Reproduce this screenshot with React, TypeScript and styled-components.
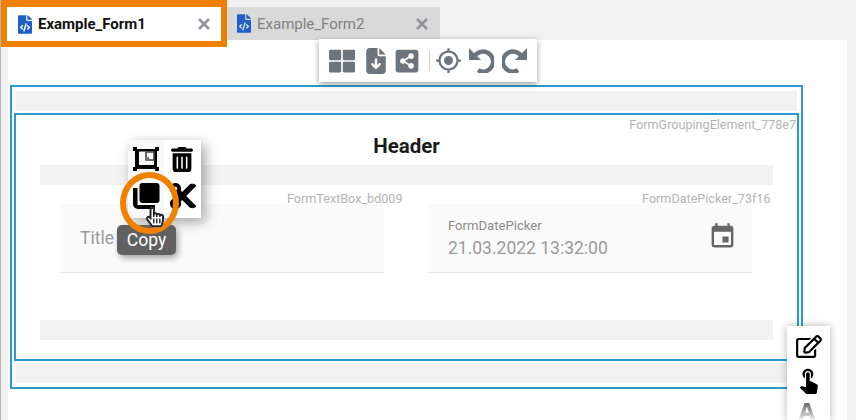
import React from "react";
import styled, { createGlobalStyle } from "styled-components";
import { FaFileCode, FaThLarge, FaShareAltSquare, FaRegEdit, FaCut, FaHandPointer, FaRegHandPointer } from "react-icons/fa";
import { FaFileArrowDown, FaTrashCan } from "react-icons/fa6";
import { MdGpsFixed, MdTouchApp, MdEvent } from "react-icons/md";

const Global = createGlobalStyle`
  html, body { margin: 0; padding: 0; width: 856px; height: 420px; overflow: hidden; background: #f0f0f0; }
  body { font-family: Roboto, "Noto Sans", sans-serif; }
  #root { width: 856px; height: 420px; }
`;

const Window = styled.div`
  position: relative;
  width: 856px;
  height: 420px;
  overflow: hidden;
  background: #f1f1f1;
  box-sizing: border-box;
  border-left: 1px solid #b5b5b5;
  display: flex;
  flex-direction: column;
`;

const TabBar = styled.div`
  display: flex;
  align-items: flex-start;
  height: 40px;
  flex: none;
  position: relative;
  z-index: 2;
`;

const Tab = styled.div<{ $active?: boolean }>`
  box-sizing: border-box;
  display: flex;
  align-items: center;
  flex: none;
  ${(p) =>
    p.$active
      ? `width: 226px; height: 47px; border: 6px solid #f08000; border-top-width: 7px; background: #fff; padding: 0 11px 0 11px; color: #111; font-weight: 700;`
      : `width: 213px; height: 33px; margin-top: 7px; background: #d9d9d9; padding: 0 12px 0 10px; color: #808080;`}
`;

const TabIcon = styled(FaFileCode)`
  width: 14px;
  height: 19px;
  color: #1f5fc8;
  flex: none;
`;

const TabLabel = styled.span`
  font-size: 15px;
  line-height: 20px;
  margin-left: 6px;
  flex: 1;
`;

const CloseGlyph = styled.svg`
  width: 12px;
  height: 12px;
  flex: none;
  stroke: #8f959b;
  stroke-width: 2.6;
  fill: none;
`;

const Canvas = styled.div`
  flex: none;
  box-sizing: border-box;
  height: 380px;
  margin: 0 9px 0 7px;
  background: #fff;
  padding: 45px 44px 0 2px;
`;

const OuterFrame = styled.div`
  position: relative;
  box-sizing: border-box;
  height: 304px;
  border: 2px solid #2b9ad0;
  padding: 4px;
  display: flex;
  flex-direction: column;
`;

const Strip = styled.div`
  height: 20px;
  flex: none;
  background: #f2f2f2;
`;

const InnerFrame = styled.div`
  position: relative;
  box-sizing: border-box;
  height: 248px;
  margin: 2px -2px;
  border: 2px solid #2b9ad0;
  padding: 0 24px;
  display: flex;
  flex-direction: column;
  flex: none;
`;

const ElementTag = styled.span`
  position: absolute;
  font-size: 12.6px;
  line-height: 14px;
  color: #b4b4b4;
  white-space: nowrap;
`;

const GroupTag = styled(ElementTag)`
  top: 3px;
  right: 1px;
`;

const Heading = styled.h2`
  margin: 0;
  height: 50px;
  box-sizing: border-box;
  padding-top: 19px;
  font-size: 20.5px;
  line-height: 24px;
  font-weight: 700;
  text-align: center;
  color: #1b1b1b;
`;

const Fields = styled.div`
  flex: none;
  display: flex;
  justify-content: space-between;
  padding: 19px 21px 47px 20px;
`;

const Field = styled.div`
  position: relative;
  box-sizing: border-box;
  width: 324px;
  height: 69px;
  background: #fafafa;
  border-bottom: 1px solid #e8e8e8;
  border-radius: 4px 4px 0 0;
  padding: 0 20px;
  display: flex;
  align-items: center;
  justify-content: space-between;
`;

const FieldTag = styled(ElementTag)`
  top: -12px;
  right: -18.5px;
`;

const Placeholder = styled.span`
  font-size: 17.5px;
  color: #9a9a9a;
`;

const DateValue = styled.div`
  display: flex;
  flex-direction: column;
  margin-top: 1px;
`;

const FieldLabel = styled.span`
  font-size: 13.1px;
  line-height: 15px;
  color: #8a8a8a;
`;

const FieldValue = styled.span`
  font-size: 17.5px;
  line-height: 24px;
  margin-top: 3px;
  color: #9a9a9a;
`;

const CalendarIcon = styled(MdEvent)`
  width: 29px;
  height: 29px;
  color: #666;
  margin: -3px -5px 0 0;
`;

const FloatingBar = styled.div`
  position: absolute;
  left: 318px;
  top: 39px;
  width: 218px;
  height: 43px;
  z-index: 3;
  background: #fff;
  box-shadow: 0 2px 6px rgba(0, 0, 0, 0.4);
  display: flex;
  align-items: center;
  padding-left: 10px;
  box-sizing: border-box;
  color: #6c757d;
`;

const Divider = styled.div`
  width: 1px;
  height: 20px;
  background: #d0d0d0;
  margin-right: 5px;
`;

const BarSlot = styled.div<{ $w: number; $h: number }>`
  width: ${(p) => p.$w}px;
  display: flex;
  align-items: center;
  flex: none;
  & > svg {
    height: ${(p) => p.$h}px;
    width: auto;
  }
`;

const ContextMenu = styled.div`
  position: absolute;
  left: 127px;
  top: 140px;
  width: 73px;
  height: 78px;
  z-index: 3;
  background: #fff;
  box-shadow: 4px 4px 12px rgba(0, 0, 0, 0.35);
  display: grid;
  grid-template-columns: 36px 37px;
  grid-template-rows: 38px 40px;
  color: #000;
`;

const MenuCell = styled.div<{ $hover?: boolean }>`
  display: flex;
  align-items: center;
  justify-content: center;
  position: relative;
  ${(p) => (p.$hover ? "background: #f8f8f8; z-index: 1;" : "")}
`;

const CopyWrap = styled.div`
  display: flex;
  margin-top: -4px;
`;

const Highlight = styled.div`
  position: absolute;
  left: 119px;
  top: 172px;
  width: 59px;
  height: 62px;
  box-sizing: border-box;
  border: 6px solid #f08000;
  border-radius: 50%;
  z-index: 6;
`;

const Tooltip = styled.div`
  position: absolute;
  left: 116px;
  top: 225px;
  width: 59px;
  height: 30px;
  z-index: 5;
  background: #616161;
  border-radius: 5px;
  color: #fff;
  font-size: 17.5px;
  line-height: 30px;
  text-align: center;
  box-shadow: 2px 3px 6px rgba(0, 0, 0, 0.35);
`;

const Cursor = styled.div`
  position: absolute;
  left: 145px;
  top: 206px;
  width: 18px;
  height: 22px;
  z-index: 7;
`;

const CursorFill = styled(FaHandPointer)`
  position: absolute;
  inset: 0;
  width: 18px;
  height: 22px;
  color: #fff;
`;

const CursorLine = styled(FaRegHandPointer)`
  position: absolute;
  inset: 0;
  width: 18px;
  height: 22px;
  color: #222;
`;

const SideMenu = styled.div`
  position: absolute;
  left: 786px;
  top: 326px;
  width: 43px;
  height: 94px;
  z-index: 3;
  background: #fff;
  box-shadow: 0 0 8px rgba(0, 0, 0, 0.3);
  color: #000;
  display: flex;
  flex-direction: column;
  align-items: center;
  padding-top: 9px;
  box-sizing: border-box;
`;

const EditIcon = styled(FaRegEdit)`
  width: 26px;
  height: 23px;
  flex: none;
`;

const TouchIcon = styled(MdTouchApp)`
  width: 29px;
  height: 29px;
  margin-top: 7px;
  flex: none;
`;

const FadedLetter = styled.span`
  font-size: 24px;
  line-height: 17px;
  height: 17px;
  font-weight: 900;
  margin: 9px 0 0 -3px;
  color: transparent;
  background: linear-gradient(#666, #eee);
  -webkit-background-clip: text;
  background-clip: text;
`;

const CutIcon = styled(FaCut)`
  width: 30px;
  height: 30px;
  margin-top: -4px;
`;

const TrashIcon = styled(FaTrashCan)`
  width: 24px;
  height: 25px;
  margin-left: -1px;
`;

const Close = () => (
  <CloseGlyph viewBox="0 0 12 12">
    <path d="M1 1l10 10M11 1L1 11" />
  </CloseGlyph>
);

const GroupGlyph = () => (
  <svg width="26" height="24" viewBox="0 0 26 24" fill="currentColor">
    <path d="M2 2h22v20H2zM6 4.500v13.500h15V4.500z" fillRule="evenodd" />
    <path d="M0 0h4v4H0zM22 0h4v4h-4zM0 20h4v4H0zM22 20h4v4h-4z" />
    <path d="M13 5h8v8h-8z" fill="none" stroke="#444" strokeWidth="1.6" />
    <path d="M13 13h3v-3h-3z" fill="#777" />
  </svg>
);

const CopyGlyph = () => (
  <svg width="27" height="27" viewBox="0 0 27 27" fill="currentColor">
    <rect x="6.500" y="0" width="20" height="20" rx="3" />
    <path d="M0 5h4.500v17H22v4H5a5 5 0 0 1-5-5z" />
  </svg>
);

const Undo = () => (
  <svg width="25" height="25" viewBox="0 0 25 25" fill="none">
    <path d="M5.500 8.500A10 10 0 1 1 9 22.200" stroke="currentColor" strokeWidth="4.400" />
    <path d="M0 0v12h12z" fill="currentColor" />
  </svg>
);

const Redo = () => (
  <svg width="25" height="25" viewBox="0 0 25 25" fill="none">
    <path d="M19.500 8.500A10 10 0 1 0 16 22.200" stroke="currentColor" strokeWidth="4.400" />
    <path d="M25 0v12H13z" fill="currentColor" />
  </svg>
);

export default function App() {
  return (
    <Window>
      <Global />
      <TabBar>
        <Tab $active>
          <TabIcon />
          <TabLabel>Example_Form1</TabLabel>
          <Close />
        </Tab>
        <Tab>
          <TabIcon />
          <TabLabel>Example_Form2</TabLabel>
          <Close />
        </Tab>
      </TabBar>
      <Canvas>
        <OuterFrame>
          <Strip />
          <InnerFrame>
            <GroupTag>FormGroupingElement_778e7</GroupTag>
            <Heading>Header</Heading>
            <Strip />
            <Fields>
              <Field>
                <FieldTag>FormTextBox_bd009</FieldTag>
                <Placeholder>Title</Placeholder>
              </Field>
              <Field>
                <FieldTag>FormDatePicker_73f16</FieldTag>
                <DateValue>
                  <FieldLabel>FormDatePicker</FieldLabel>
                  <FieldValue>21.03.2022 13:32:00</FieldValue>
                </DateValue>
                <CalendarIcon />
              </Field>
            </Fields>
            <Strip />
          </InnerFrame>
          <Strip />
        </OuterFrame>
      </Canvas>
      <FloatingBar>
        <BarSlot $w={34} $h={26}><FaThLarge /></BarSlot>
        <BarSlot $w={31} $h={26}><FaFileArrowDown /></BarSlot>
        <BarSlot $w={35} $h={26}><FaShareAltSquare /></BarSlot>
        <Divider />
        <BarSlot $w={34} $h={27}><MdGpsFixed /></BarSlot>
        <BarSlot $w={33} $h={25}><Undo /></BarSlot>
        <BarSlot $w={25} $h={25}><Redo /></BarSlot>
      </FloatingBar>
      <ContextMenu>
        <MenuCell $hover><GroupGlyph /></MenuCell>
        <MenuCell><TrashIcon /></MenuCell>
        <MenuCell $hover><CopyWrap><CopyGlyph /></CopyWrap></MenuCell>
        <MenuCell><CutIcon /></MenuCell>
      </ContextMenu>
      <Highlight />
      <Tooltip>Copy</Tooltip>
      <Cursor>
        <CursorFill />
        <CursorLine />
      </Cursor>
      <SideMenu>
        <EditIcon />
        <TouchIcon />
        <FadedLetter>A</FadedLetter>
      </SideMenu>
    </Window>
  );
}
